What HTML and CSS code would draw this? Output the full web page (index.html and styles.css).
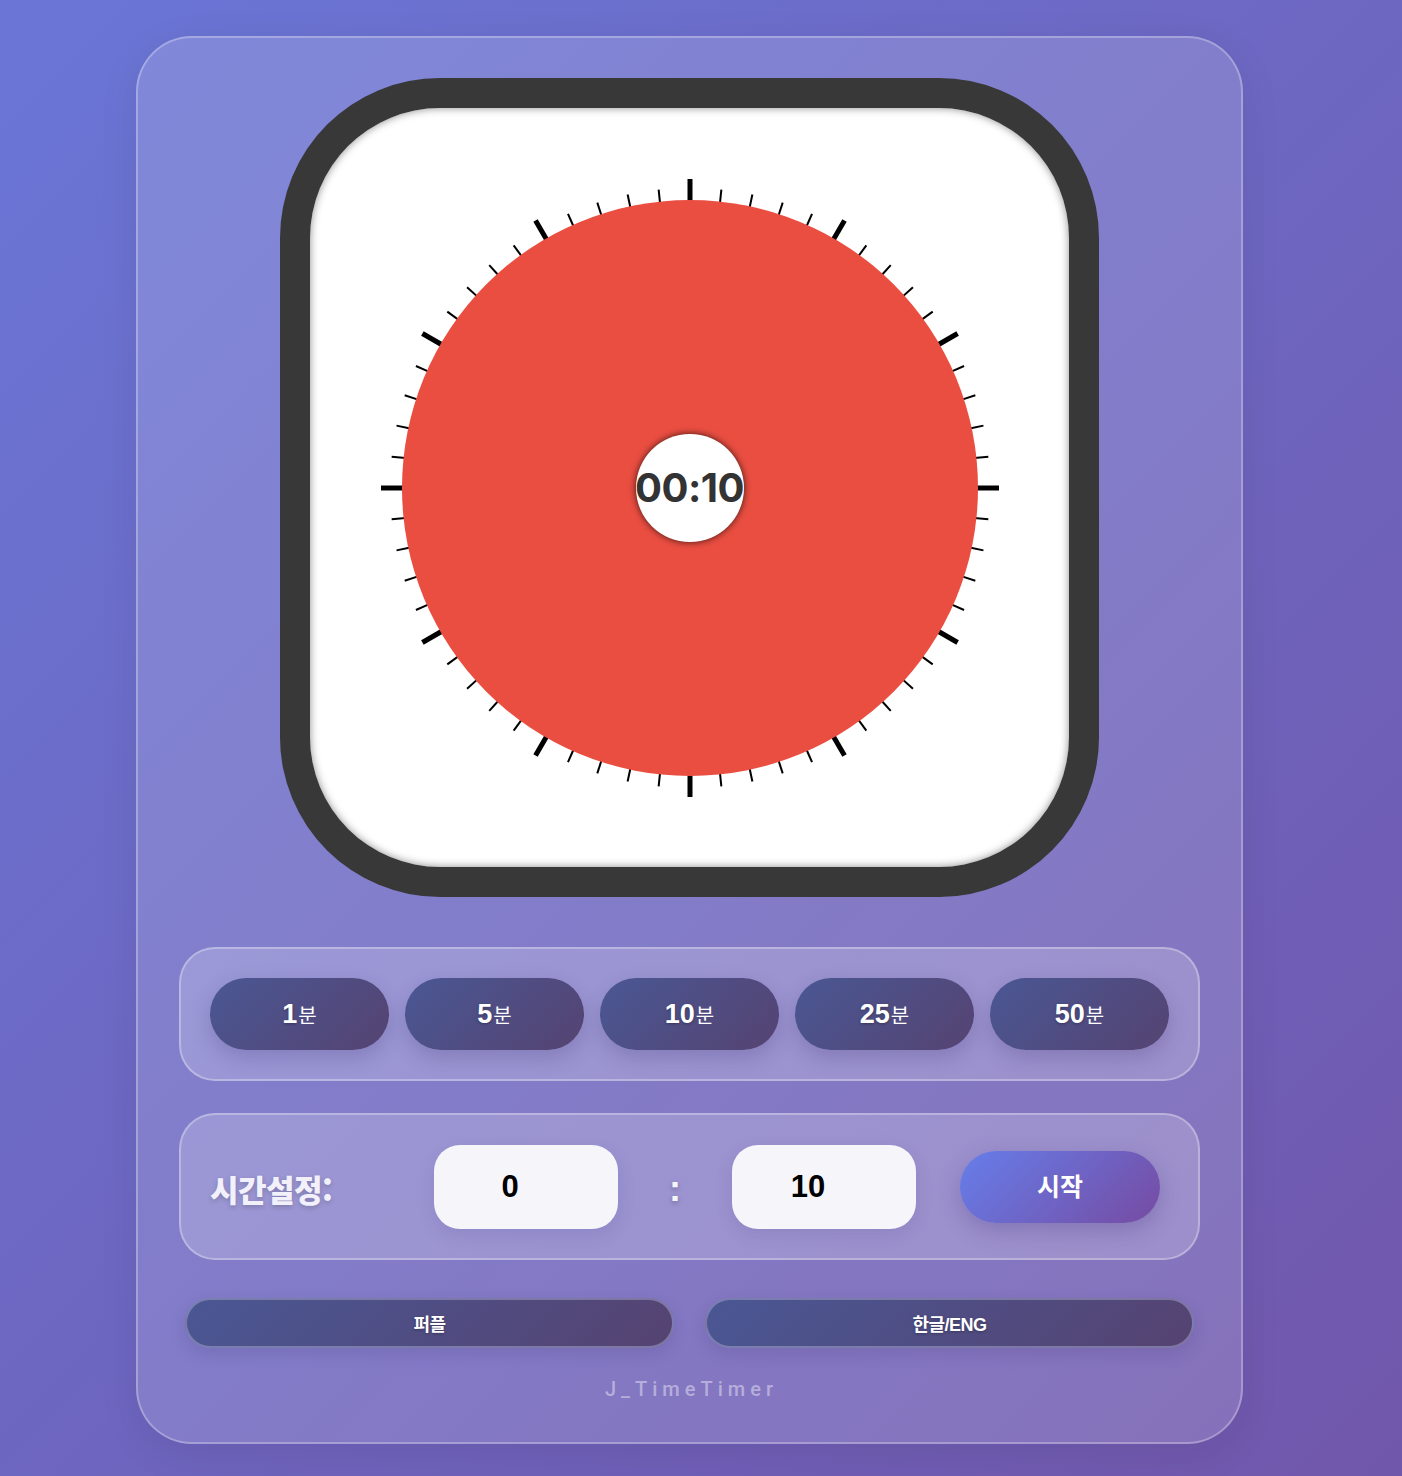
FILE: index.html
```html
<!DOCTYPE html>
<html lang="ko">
<head>
<meta charset="utf-8">
<title>J_TimeTimer</title>
<link rel="stylesheet" href="styles.css">
</head>
<body>
<div class="app">
  <div class="frame">
    <div class="face">
      <div class="dial">
        <svg class="dial-svg" viewBox="-320 -320 640 640" width="640" height="640">
          <defs>
            <line id="tm" x1="0" y1="-286" x2="0" y2="-300" stroke="#000" stroke-width="2"/>
            <line id="tM" x1="0" y1="-286" x2="0" y2="-309" stroke="#000" stroke-width="5"/>
          </defs>
          <g>
            <use href="#tM" transform="rotate(0)"/>
            <use href="#tm" transform="rotate(6)"/>
            <use href="#tm" transform="rotate(12)"/>
            <use href="#tm" transform="rotate(18)"/>
            <use href="#tm" transform="rotate(24)"/>
            <use href="#tM" transform="rotate(30)"/>
            <use href="#tm" transform="rotate(36)"/>
            <use href="#tm" transform="rotate(42)"/>
            <use href="#tm" transform="rotate(48)"/>
            <use href="#tm" transform="rotate(54)"/>
            <use href="#tM" transform="rotate(60)"/>
            <use href="#tm" transform="rotate(66)"/>
            <use href="#tm" transform="rotate(72)"/>
            <use href="#tm" transform="rotate(78)"/>
            <use href="#tm" transform="rotate(84)"/>
            <use href="#tM" transform="rotate(90)"/>
            <use href="#tm" transform="rotate(96)"/>
            <use href="#tm" transform="rotate(102)"/>
            <use href="#tm" transform="rotate(108)"/>
            <use href="#tm" transform="rotate(114)"/>
            <use href="#tM" transform="rotate(120)"/>
            <use href="#tm" transform="rotate(126)"/>
            <use href="#tm" transform="rotate(132)"/>
            <use href="#tm" transform="rotate(138)"/>
            <use href="#tm" transform="rotate(144)"/>
            <use href="#tM" transform="rotate(150)"/>
            <use href="#tm" transform="rotate(156)"/>
            <use href="#tm" transform="rotate(162)"/>
            <use href="#tm" transform="rotate(168)"/>
            <use href="#tm" transform="rotate(174)"/>
            <use href="#tM" transform="rotate(180)"/>
            <use href="#tm" transform="rotate(186)"/>
            <use href="#tm" transform="rotate(192)"/>
            <use href="#tm" transform="rotate(198)"/>
            <use href="#tm" transform="rotate(204)"/>
            <use href="#tM" transform="rotate(210)"/>
            <use href="#tm" transform="rotate(216)"/>
            <use href="#tm" transform="rotate(222)"/>
            <use href="#tm" transform="rotate(228)"/>
            <use href="#tm" transform="rotate(234)"/>
            <use href="#tM" transform="rotate(240)"/>
            <use href="#tm" transform="rotate(246)"/>
            <use href="#tm" transform="rotate(252)"/>
            <use href="#tm" transform="rotate(258)"/>
            <use href="#tm" transform="rotate(264)"/>
            <use href="#tM" transform="rotate(270)"/>
            <use href="#tm" transform="rotate(276)"/>
            <use href="#tm" transform="rotate(282)"/>
            <use href="#tm" transform="rotate(288)"/>
            <use href="#tm" transform="rotate(294)"/>
            <use href="#tM" transform="rotate(300)"/>
            <use href="#tm" transform="rotate(306)"/>
            <use href="#tm" transform="rotate(312)"/>
            <use href="#tm" transform="rotate(318)"/>
            <use href="#tm" transform="rotate(324)"/>
            <use href="#tM" transform="rotate(330)"/>
            <use href="#tm" transform="rotate(336)"/>
            <use href="#tm" transform="rotate(342)"/>
            <use href="#tm" transform="rotate(348)"/>
            <use href="#tm" transform="rotate(354)"/>
          </g>
          <circle cx="0" cy="0" r="288" fill="#ea4e41"/>
        </svg>
        <div class="center"><span class="time">00:10</span></div>
      </div>
    </div>
  </div>

  <div class="panel presets">
    <button class="preset"><b>1</b><span>분</span></button>
    <button class="preset"><b>5</b><span>분</span></button>
    <button class="preset"><b>10</b><span>분</span></button>
    <button class="preset"><b>25</b><span>분</span></button>
    <button class="preset"><b>50</b><span>분</span></button>
  </div>

  <div class="panel setter">
    <label class="set-label">시간설정:</label>
    <input class="num" type="text" value="0">
    <span class="colon">:</span>
    <input class="num" type="text" value="10">
    <button class="start">시작</button>
  </div>

  <div class="bottom">
    <button class="wide">퍼플</button>
    <button class="wide">한글/ENG</button>
  </div>

  <div class="footer">J_TimeTimer</div>
</div>
</body>
</html>
```

FILE: styles.css
```css
* { box-sizing: border-box; }

html, body {
  margin: 0;
  padding: 0;
}

body {
  min-height: 1476px;
  background: linear-gradient(135deg, #6a76d6 0%, #7157ac 100%);
  font-family: "Liberation Sans", "Noto Sans CJK KR", sans-serif;
  overflow: hidden;
}

.app {
  width: 1107px;
  margin: 36px 0 0 136px;
  padding: 40px 41px 0;
  height: 1408px;
  border: 2px solid rgba(255, 255, 255, 0.28);
  border-radius: 56px;
  background: rgba(255, 255, 255, 0.15);
  box-shadow: 0 10px 40px rgba(0, 0, 0, 0.08);
  display: flex;
  flex-direction: column;
}

.frame {
  width: 819px;
  height: 819px;
  margin: 0 auto;
  background: #383838;
  border-radius: 160px;
  padding: 30px;
}

.face {
  width: 100%;
  height: 100%;
  background: #fff;
  border-radius: 130px;
  box-shadow: inset 0 0 9px rgba(0, 0, 0, 0.45);
  display: flex;
  align-items: center;
  justify-content: center;
}

.dial {
  display: grid;
  place-items: center;
}

.dial-svg {
  grid-area: 1 / 1;
  display: block;
}

.center {
  grid-area: 1 / 1;
  width: 108px;
  height: 108px;
  border-radius: 50%;
  background: #fff;
  box-shadow: 0 0 7px rgba(0, 0, 0, 0.75);
  display: flex;
  align-items: center;
  justify-content: center;
}

.time {
  font-family: Inter, "Liberation Sans", sans-serif;
  font-weight: 700;
  font-size: 40px;
  color: #333;
  letter-spacing: -0.5px;
  white-space: nowrap;
}

.panel {
  width: 100%;
  border: 2px solid rgba(255, 255, 255, 0.3);
  background: rgba(255, 255, 255, 0.2);
  border-radius: 36px;
  display: flex;
  align-items: center;
}

.presets {
  margin-top: 50px;
  height: 134px;
  padding: 0 29px;
  gap: 16px;
}

.preset {
  flex: 1;
  height: 72px;
  border: none;
  border-radius: 36px;
  background: linear-gradient(135deg, #4a5794 0%, #554371 100%);
  box-shadow: 0 8px 20px rgba(50, 40, 100, 0.22);
  color: #fff;
  display: block;
  text-align: center;
  line-height: 72px;
  padding: 0;
  font-family: "Liberation Sans", "Noto Sans CJK KR", sans-serif;
}

.preset b {
  font-size: 27px;
  font-weight: 700;
  text-shadow: 0 1px 3px rgba(0, 0, 0, 0.3);
  vertical-align: baseline;
}

.preset span {
  font-family: "Noto Sans CJK KR", sans-serif;
  font-size: 20px;
  font-weight: 400;
  margin-left: 1px;
  vertical-align: baseline;
}

.setter {
  margin-top: 32px;
  height: 147px;
  padding: 0 29px;
}

.set-label {
  width: 224px;
  flex: none;
  font-family: "Noto Sans CJK KR", sans-serif;
  font-weight: 900;
  font-size: 31px;
  color: #f2f0fa;
  text-shadow: 0 2px 5px rgba(0, 0, 0, 0.2);
  letter-spacing: -0.5px;
  position: relative;
  top: 2px;
}

.num {
  width: 184px;
  height: 84px;
  flex: none;
  border: none;
  border-radius: 26px;
  background: #f5f5fa;
  padding: 0 32px 0 0;
  text-align: center;
  font-family: "Liberation Sans", sans-serif;
  font-weight: 700;
  font-size: 31px;
  color: #000;
  box-shadow: 0 6px 18px rgba(60, 40, 120, 0.12);
  outline: none;
}

.colon {
  width: 114px;
  flex: none;
  text-align: center;
  font-family: "Liberation Sans", sans-serif;
  font-weight: 700;
  font-size: 36px;
  color: #f5f5fa;
  text-shadow: 0 2px 5px rgba(0, 0, 0, 0.25);
  position: relative;
  top: 2px;
}

.start {
  width: 200px;
  height: 72px;
  flex: none;
  margin-left: 44px;
  border: none;
  border-radius: 36px;
  background: linear-gradient(135deg, #667eea 0%, #764ba2 100%);
  box-shadow: 0 8px 22px rgba(60, 40, 120, 0.25);
  color: #fff;
  font-family: "Noto Sans CJK KR", sans-serif;
  font-weight: 700;
  font-size: 25px;
  padding: 0 0 4px;
}

.bottom {
  margin-top: 38px;
  padding: 0 6px;
  display: flex;
  gap: 31px;
}

.wide {
  flex: 1;
  height: 50px;
  border: 2px solid rgba(160, 160, 200, 0.55);
  border-radius: 25px;
  background: linear-gradient(135deg, #4a5794 0%, #554371 100%);
  box-shadow: 0 6px 16px rgba(50, 40, 100, 0.15);
  color: #fff;
  font-family: "Liberation Sans", "Noto Sans CJK KR", sans-serif;
  font-weight: 700;
  font-size: 18px;
  letter-spacing: -0.5px;
  text-shadow: 0 1px 3px rgba(0, 0, 0, 0.3);
  padding: 0;
}

.footer {
  margin-top: 28px;
  text-align: center;
  font-family: Roboto, "Liberation Sans", sans-serif;
  font-size: 20px;
  font-weight: 500;
  letter-spacing: 5px;
  color: rgba(255, 255, 255, 0.42);
  line-height: 26px;
  padding-left: 4px;
}
```
